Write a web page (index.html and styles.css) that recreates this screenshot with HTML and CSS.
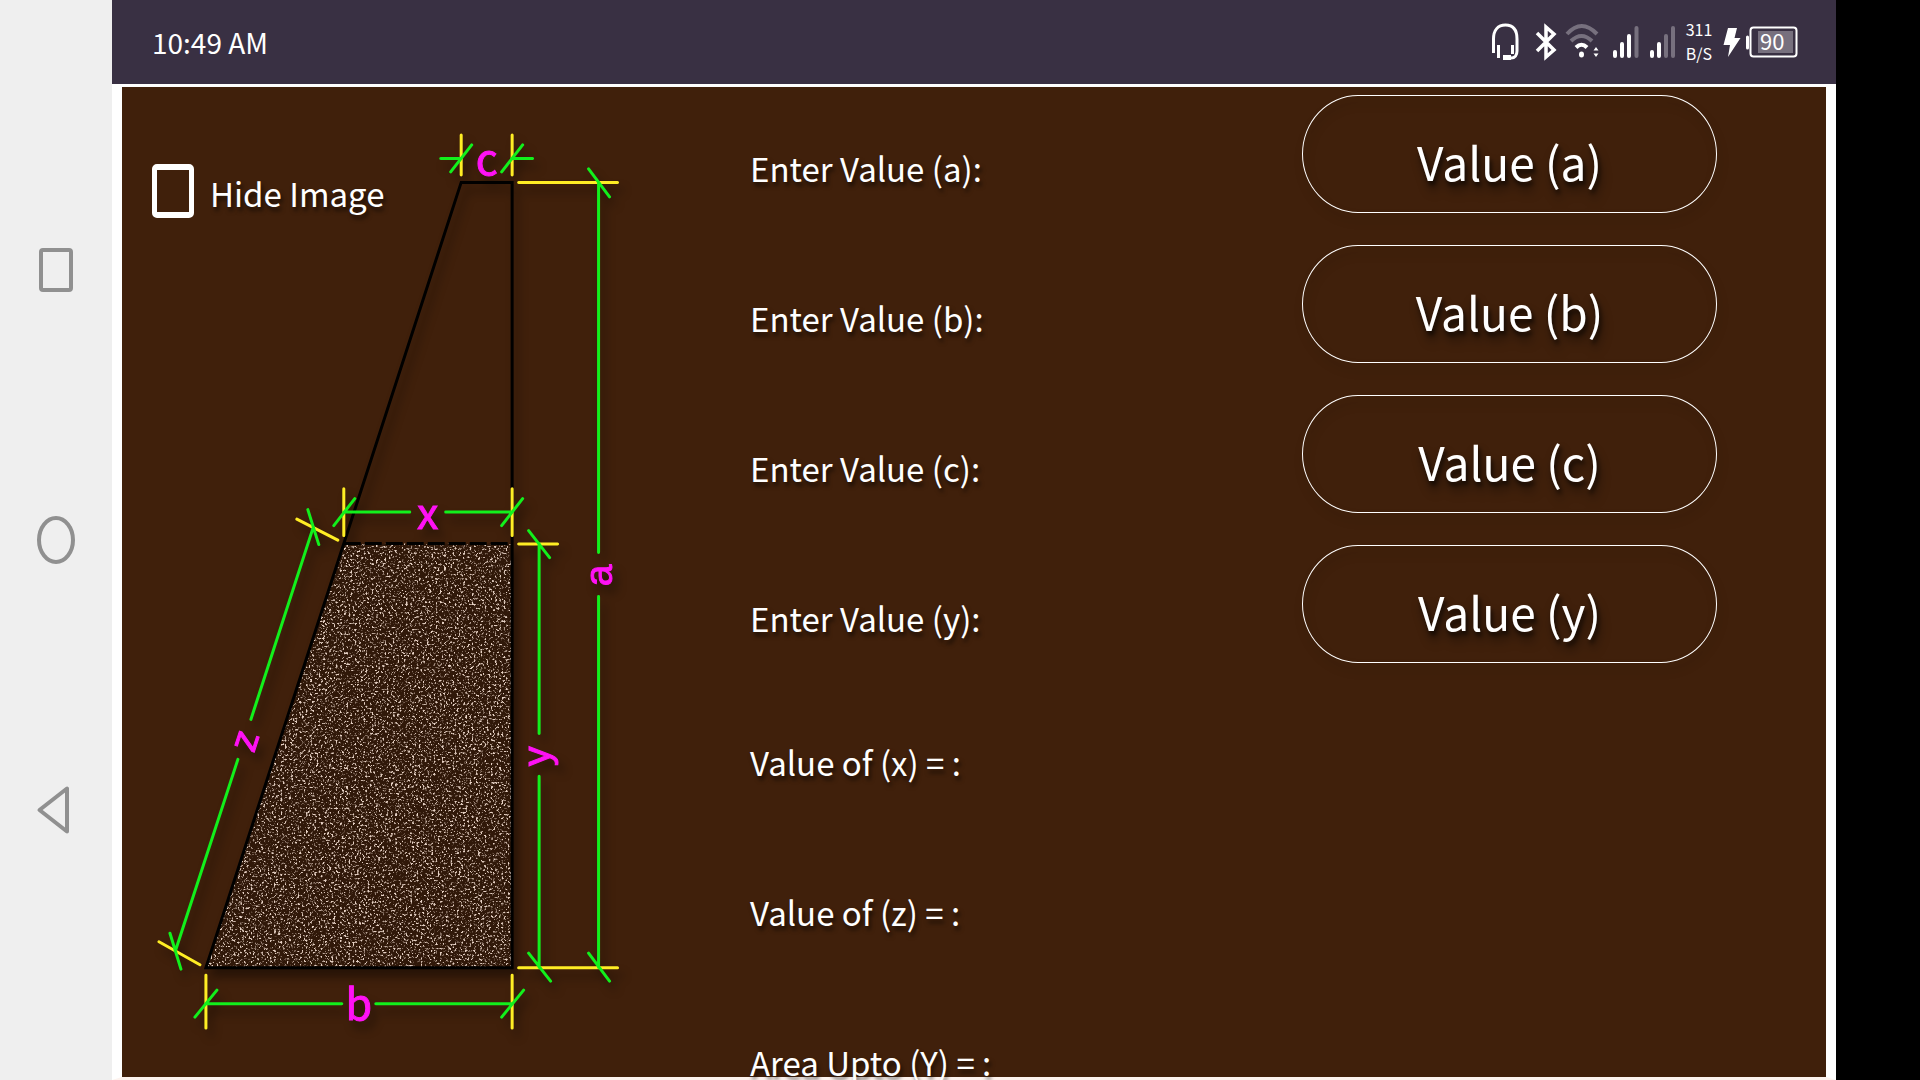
FILE: index.html
```
<!DOCTYPE html>
<html lang="en">
<head>
<meta charset="utf-8">
<meta name="viewport" content="width=device-width, initial-scale=1">
<title>Wall section calculator</title>
<link rel="stylesheet" href="styles.css">
</head>
<body>
<div class="device">
  <nav class="navbar" aria-label="System navigation">
    <button class="nav-btn" type="button" aria-label="Recent apps"><svg width="40" height="52" viewBox="0 0 40 52"><rect x="5" y="6" width="30" height="40" rx="2"/></svg></button>
    <button class="nav-btn" type="button" aria-label="Home"><svg width="40" height="52" viewBox="0 0 40 52"><ellipse cx="20" cy="26" rx="17" ry="22"/></svg></button>
    <button class="nav-btn" type="button" aria-label="Back"><svg width="40" height="52" viewBox="0 0 40 52"><path d="M31 4.500V47.500L3.500 26Z"/></svg></button>
  </nav>

  <div class="screen">
    <header class="status">
      <time class="clock">10:49 AM</time>
      <div class="tray">
        <svg width="40" height="84" viewBox="1488 0 40 84" fill="none" stroke="#fff" stroke-width="3"><path d="M1493.500 53V39C1493.500 30 1498 25 1505.500 25S1517 30 1517 39V51C1517 55 1515 58 1511 58H1503"/><path d="M1498.500 45V58M1512.500 45V54"/><path d="M1503 57.500H1511" stroke-width="5"/></svg>
        <svg width="32" height="84" viewBox="1528 0 32 84" fill="none" stroke="#fff" stroke-width="3.500"><path d="M1537 33L1554 50L1546 57V27L1554 34L1537 51"/></svg>
        <svg width="46" height="84" viewBox="1560 0 46 84" fill="none" stroke="#fff" stroke-width="4"><g stroke="#77707e"><path d="M1567 34Q1581.500 18 1597 34"/><path d="M1571 41Q1581.500 31 1592 41"/></g><path d="M1576 47.500Q1581.500 42 1587 47.500"/><ellipse cx="1581.500" cy="54.500" rx="2.500" ry="3" fill="#fff" stroke="none"/><path d="M1593.500 50.500L1596 47L1598.500 50.500ZM1593.500 53.500L1596 57L1598.500 53.500Z" fill="#fff" stroke="none"/></svg>
        <svg width="37" height="84" viewBox="1606 0 37 84" stroke="#fff" stroke-width="4" stroke-linecap="round"><path d="M1615 52V56M1622 44V56M1629 36V56"/><path d="M1636.500 28V56" stroke="#77707e"/></svg>
        <svg width="39" height="84" viewBox="1643 0 39 84" stroke="#fff" stroke-width="4" stroke-linecap="round"><path d="M1652 52V56M1659 44V56"/><path d="M1666 36V56M1673 28V56" stroke="#77707e"/></svg>
        <div class="speed"><span>311</span><span>B/S</span></div>
        <svg width="27" height="84" viewBox="1716 0 27 84" fill="#fff"><path d="M1728 28H1737L1734.500 38H1740.500L1728 57L1730 45H1723.500Z"/></svg>
        <svg class="battery" width="57" height="84" viewBox="1743 0 57 84"><path d="M1747.500 37V48" stroke="#fff" stroke-width="3" stroke-linecap="round"/><rect x="1750.500" y="27.500" width="46" height="29" rx="3" fill="none" stroke="#fff" stroke-width="2"/><rect x="1758" y="31" width="35" height="22" fill="#77707e"/><text x="1760" y="50">90</text></svg>
      </div>
    </header>

    <main class="panel">
      <section class="figure">
        <label class="toggle"><input class="box" type="checkbox"><span>Hide Image</span></label>
        <svg class="diagram" viewBox="122 87 528 960" role="img" aria-label="Wall section with dimensions a, b, c, x, y and z">
          <defs>
            <filter id="gravel" x="0" y="0" width="1" height="1" color-interpolation-filters="sRGB">
              <feTurbulence type="fractalNoise" baseFrequency="0.47" numOctaves="2" seed="7" result="n"/>
              <feColorMatrix in="n" type="matrix" values="0 0 0 0 .90  0 0 0 0 .82  0 0 0 0 .77  5 3 0 0 -4.250" result="s"/>
              <feComposite in="s" in2="SourceGraphic" operator="in" result="c"/>
              <feMerge><feMergeNode in="SourceGraphic"/><feMergeNode in="c"/></feMerge>
            </filter>
          </defs>
          <polygon points="344,544 512,544 512,968 206,968" fill="#301809" filter="url(#gravel)"/>
          <g class="outline"><path d="M206 968.500L461.500 182.500H512.500V968.500Z"/><path d="M344 544H512" stroke-dasharray="17 4"/></g>
          <g class="ext"><path d="M461.500 135V175M512.500 135V175M519 182.500H618M344 489V536M512.500 489V536M297 519.500L338 540.500M519 544.500H558M159 942.500L200 965.500M206 976V1029M512.500 976V1029M519 968.500H618"/></g>
          <g class="dim"><path d="M441 158.500H461M512 158.500H533M451 172L472 145M502 172L523 145"/><path d="M599 182V553M599 597V968M589 169L610 197M589 954L610 982"/><path d="M344 512.500H410M446 512.500H512M334 526L355 499M502 526L523 499"/><path d="M539.500 544V734M539.500 777V968M529 531L550 558M529 954L551 982"/><path d="M313 529L251 720M238 760L176 950M308 510L319 545M170 934L181 970"/><path d="M206 1004.500H342M376 1004.500H512M195 1018L217 991M502 1018L524 991"/></g>
          <g class="names"><text class="tall" x="487" y="175">c</text><text class="tall" x="428" y="529">x</text><text class="tall" x="359" y="1021">b</text><text transform="translate(612 576) rotate(-90)">a</text><text transform="translate(550 757) rotate(-90)">y</text><text transform="translate(257 745) rotate(-72)">z</text></g>
        </svg>
      </section>

      <form class="form">
        <div class="row"><label class="caption" for="a">Enter Value (a):</label><button class="pill" id="a" type="button">Value (a)</button></div>
        <div class="row"><label class="caption" for="b">Enter Value (b):</label><button class="pill" id="b" type="button">Value (b)</button></div>
        <div class="row"><label class="caption" for="c">Enter Value (c):</label><button class="pill" id="c" type="button">Value (c)</button></div>
        <div class="row"><label class="caption" for="y">Enter Value (y):</label><button class="pill" id="y" type="button">Value (y)</button></div>
        <div class="results">
          <p class="caption">Value of (x) = :</p>
          <p class="caption">Value of (z) = :</p>
          <p class="caption">Area Upto (Y) = :</p>
        </div>
      </form>
    </main>
  </div>
</div>
</body>
</html>
```
FILE: styles.css
```
* { box-sizing: border-box; }
body {
  margin: 0;
  background: #000;
  color: #fff;
  font-family: "Noto Sans CJK SC", "Liberation Sans", sans-serif;
}
button { font: inherit; color: inherit; background: none; border: 0; padding: 0; }
svg { display: block; }

.device {
  display: grid;
  grid-template-columns: 112px 1fr;
  height: 100vh;
  padding-right: 84px;
  overflow: hidden;
}

.navbar {
  display: flex;
  flex-direction: column;
  padding: 12.5vh 0;
  background: #efefef;
}
.nav-btn { flex: 1; display: grid; place-items: center; }
.nav-btn svg { fill: none; stroke: #909090; stroke-width: 4; stroke-linejoin: round; }

.screen {
  display: flex;
  flex-direction: column;
  min-height: 0;
}
.status {
  flex: none;
  display: flex;
  align-items: center;
  justify-content: space-between;
  height: 84px;
  padding: 0 36px 0 40px;
  background: #393043;
}
.clock { font-size: 28px; line-height: 36px; }
.tray { display: flex; align-items: center; }
.speed {
  display: flex;
  flex-direction: column;
  align-items: center;
  width: 34px;
  padding-bottom: 2px;
  font-size: 16px;
  line-height: 24px;
}
.battery text { fill: #fff; font-size: 22px; }

.panel {
  flex: 1;
  min-height: 0;
  display: grid;
  grid-template-columns: 628fr 1076fr;
  background: #40200b;
  border: solid #fff;
  border-width: 3px 10px;
  border-bottom-color: #fdf3ee;
}

.figure { display: grid; align-items: start; }
.figure > * { grid-area: 1 / 1; }
.diagram {
  width: 84%;
  filter: drop-shadow(5px 8px 5px rgba(0, 0, 0, .4));
}
.outline { fill: none; stroke: #000; stroke-width: 3; }
.ext { fill: none; stroke: #ffed24; stroke-width: 3; stroke-linecap: round; }
.dim { fill: none; stroke: #12f01c; stroke-width: 3; stroke-linecap: round; }
.names { fill: #ff12f5; font-family: "Liberation Sans", sans-serif; font-size: 39px; text-anchor: middle; stroke: #ff12f5; }
.names .tall { font-family: "Noto Sans CJK SC", "Liberation Sans", sans-serif; font-size: 43px; }

.toggle {
  z-index: 1;
  display: flex;
  align-items: center;
  justify-self: start;
  gap: 16px;
  margin: 75px 0 0 30px;
  font-size: 33px;
  line-height: 54px;
  text-shadow: 2px 4px 4px rgba(0, 0, 0, .6);
}
.toggle span { padding-top: 4px; }
.box {
  appearance: none;
  width: 42px;
  height: 54px;
  margin: 0;
  border: solid #fff;
  border-width: 6px 5px;
  border-radius: 5px;
}

.form {
  display: flex;
  flex-direction: column;
  gap: 32px;
  padding: 8px 109px 0 0;
}
.row {
  display: grid;
  grid-template-columns: 552fr 415fr;
  align-items: center;
}
.caption {
  margin: 0;
  padding-top: 28px;
  font-size: 33px;
  line-height: 42px;
  text-shadow: 2px 4px 4px rgba(0, 0, 0, .6);
}
.pill {
  height: 118px;
  padding-top: 14px;
  border: 1px solid #fff;
  border-radius: 56px / 59px;
  font-size: 46px;
  line-height: 56px;
  text-shadow: 2px 4px 4px rgba(0, 0, 0, .6);
  filter: drop-shadow(2px 7px 5px rgba(0, 0, 0, .4));
}
.results {
  display: flex;
  flex-direction: column;
  gap: 80px;
  padding-top: 18px;
}
```
